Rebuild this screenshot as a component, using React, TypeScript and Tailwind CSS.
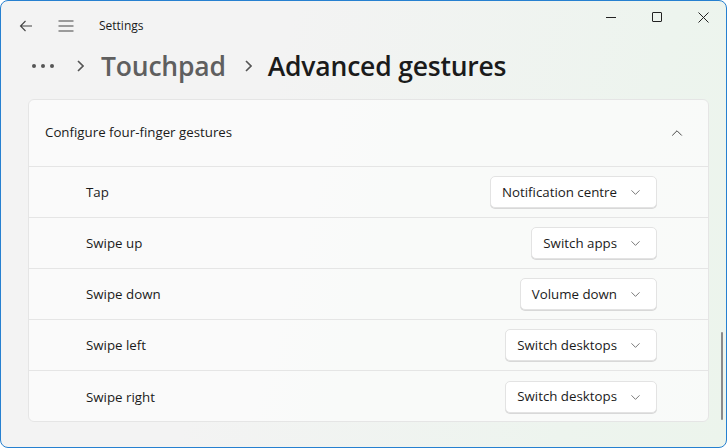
import { ChevronDown, ChevronUp } from "lucide-react";

const rows = [
  { label: "Tap", value: "Notification centre" },
  { label: "Swipe up", value: "Switch apps" },
  { label: "Swipe down", value: "Volume down" },
  { label: "Swipe left", value: "Switch desktops" },
  { label: "Swipe right", value: "Switch desktops" },
];

function Dropdown({ value }: { value: string }) {
  return (
    <div className="flex h-[32px] items-center gap-[11px] rounded-[5px] border border-[#e3e3e3] bg-white pl-[11px] pr-[13px] pt-px shadow-[0_1px_0_#d8d8d8]">
      <span className="text-[13.3px] text-[#1b1b1b]">{value}</span>
      <ChevronDown size={15} strokeWidth={1.3} className="text-[#5a5a5a]" />
    </div>
  );
}

function App() {
  return (
    <div
      className="flex h-[448px] w-[727px] flex-col overflow-hidden rounded-[8px] border border-[#2680d0] bg-[linear-gradient(105deg,#f3f3f3_35%,#edf4ee_80%,#ecf4ec)] text-[#1b1b1b]"
      style={{ fontFamily: '"Open Sans", "Noto Sans", sans-serif' }}
    >
      {/* title bar */}
      <div className="flex h-[40px] shrink-0 items-start">
        <div className="flex h-[50px] items-center">
          <div className="flex w-[48px] justify-center pl-[1px]">
            <svg width="14" height="12" viewBox="0 0 14 12" fill="none" stroke="#444" strokeWidth="1.1">
              <path d="M13 6H1.5M6.5 1L1.5 6l5 5" />
            </svg>
          </div>
          <div className="flex w-[34px] justify-center">
            <svg width="16" height="12" viewBox="0 0 16 12" fill="none" stroke="#444" strokeWidth="1.1">
              <path d="M0.5 1h15M0.5 6h15M0.5 11h15" />
            </svg>
          </div>
          <span className="ml-[16px] text-[12px]">Settings</span>
        </div>
        <div className="ml-auto flex">
          <div className="flex h-[32px] w-[46px] items-center justify-center">
            <div className="h-px w-[10px] bg-[#222]" />
          </div>
          <div className="flex h-[32px] w-[46px] items-center justify-center">
            <div className="h-[10px] w-[10px] rounded-[1px] border border-[#222]" />
          </div>
          <div className="flex h-[32px] w-[46px] items-center justify-center">
            <svg width="11" height="11" viewBox="0 0 11 11" stroke="#222" strokeWidth="1">
              <path d="M0.5 0.5l10 10M10.5 0.5l-10 10" />
            </svg>
          </div>
        </div>
      </div>

      {/* breadcrumb */}
      <div className="flex h-[50px] shrink-0 items-center pl-[31px]">
        <div className="flex gap-[5px]">
          <span className="h-[4px] w-[4px] rounded-full bg-[#555]" />
          <span className="h-[4px] w-[4px] rounded-full bg-[#555]" />
          <span className="h-[4px] w-[4px] rounded-full bg-[#555]" />
        </div>
        <svg className="ml-[23px]" width="7" height="12" viewBox="0 0 7 12" fill="none" stroke="#555" strokeWidth="1.6">
          <path d="M1 1l5 5-5 5" />
        </svg>
        <span className="ml-[17px] text-[26.5px] font-semibold leading-none tracking-[-0.2px] text-[#5f5f5f]">Touchpad</span>
        <svg className="ml-[19px]" width="7" height="12" viewBox="0 0 7 12" fill="none" stroke="#555" strokeWidth="1.6">
          <path d="M1 1l5 5-5 5" />
        </svg>
        <span className="ml-[16px] text-[26.5px] font-semibold leading-none tracking-[-0.2px] text-[#1b1b1b]">Advanced gestures</span>
      </div>

      {/* content */}
      <div className="flex min-h-0 flex-1 pl-[27px] pt-[8px]">
        <div className="flex h-[323px] w-[681px] flex-col rounded-[6px] border border-[#e5e5e5] bg-[#fbfbfb]/80">
          <div className="flex h-[67px] shrink-0 items-center justify-between border-b border-[#e5e5e5] pl-[16px] pr-[22px]">
            <span className="text-[13.3px]">Configure four-finger gestures</span>
            <ChevronUp size={18} strokeWidth={1.2} className="text-[#333]" />
          </div>
          {rows.map((r, i) => (
            <div
              key={r.label}
              className={`flex h-[51px] shrink-0 items-center justify-between pl-[57px] pr-[51px] ${
                i < rows.length - 1 ? "border-b border-[#e5e5e5]" : ""
              }`}
            >
              <span className="pt-[2px] text-[13.3px]">{r.label}</span>
              <Dropdown value={r.value} />
            </div>
          ))}
        </div>
        <div className="ml-[12px] mt-[233px] h-[88px] w-[2px] rounded-full bg-[#8a8a8a]" />
      </div>
    </div>
  );
}

export default App;
